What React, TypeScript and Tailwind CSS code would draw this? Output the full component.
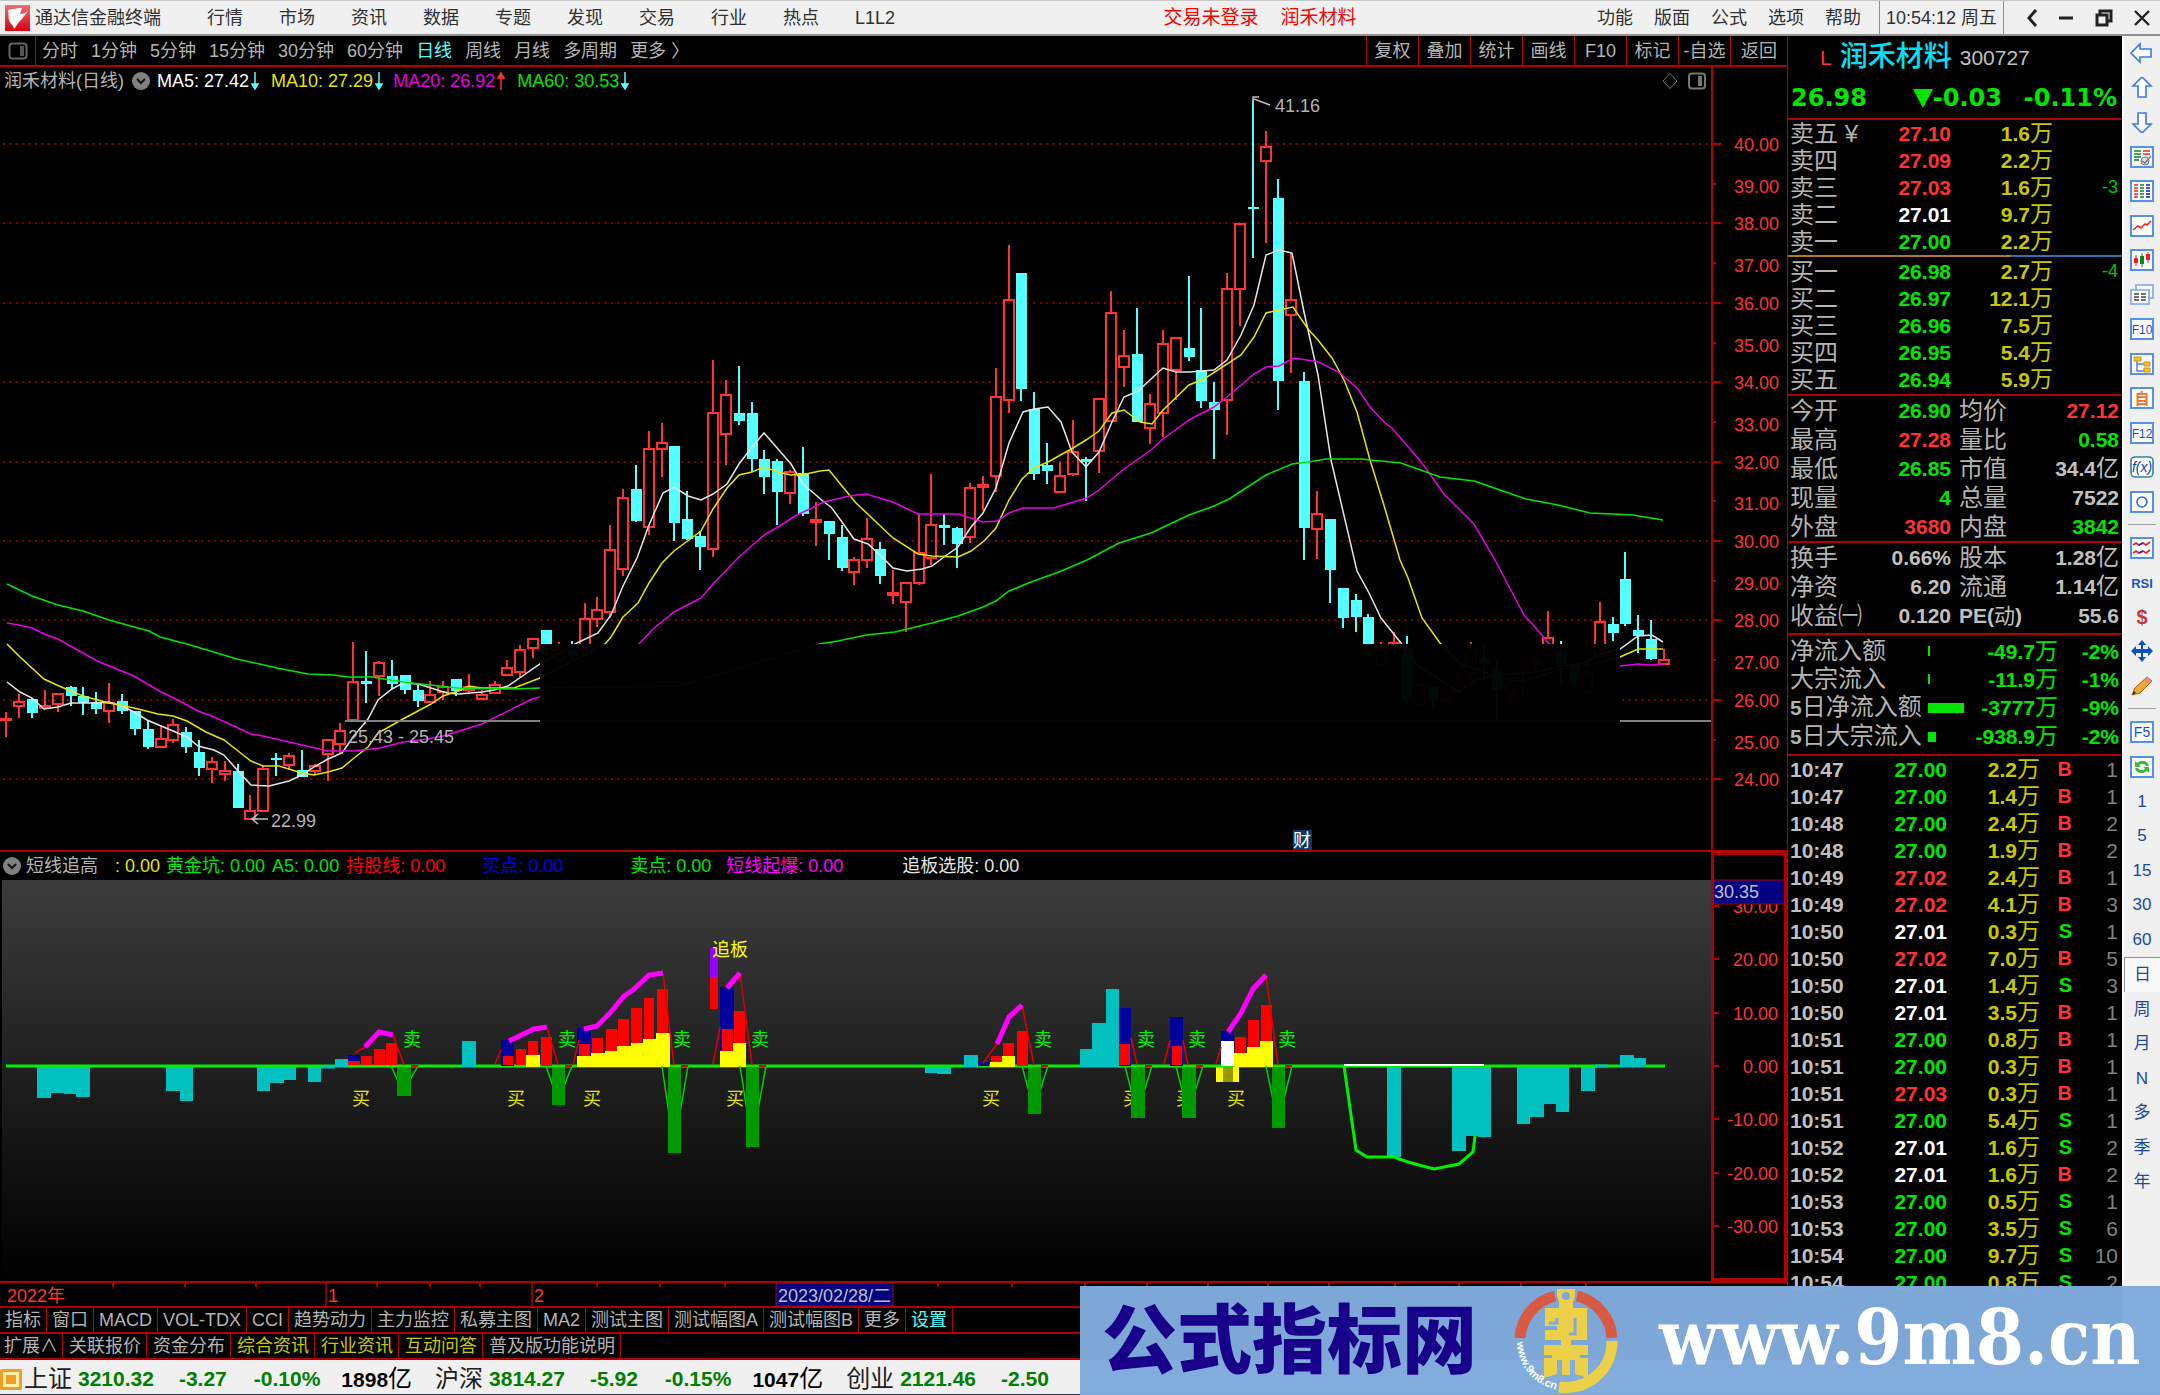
import React from 'react';

const menus = ['行情', '市场', '资讯', '数据', '专题', '发现', '交易', '行业', '热点', 'L1L2'];
const rightMenus = ['功能', '版面', '公式', '选项', '帮助'];
const periods = ['分时', '1分钟', '5分钟', '15分钟', '30分钟', '60分钟', '日线', '周线', '月线', '多周期', '更多 〉'];
const tools = ['复权', '叠加', '统计', '画线', 'F10', '标记', '-自选', '返回'];
const tabs = ['指标', '窗口', 'MACD', 'VOL-TDX', 'CCI', '趋势动力', '主力监控', '私募主图', 'MA2', '测试主图', '测试幅图A', '测试幅图B', '更多', '设置'];
const links = ['扩展∧', '关联报价', '资金分布', '综合资讯', '行业资讯', '互动问答', '普及版功能说明'];

const R = 'text-[#ff3232]';
const G = 'text-[#00e600]';
const W = 'text-white';
const S = 'text-[#c0c0c0]';

const asks = [
  ['卖五 ¥', '27.10', '1.6', '', R],
  ['卖四', '27.09', '2.2', '', R],
  ['卖三', '27.03', '1.6', '-3', R],
  ['卖二', '27.01', '9.7', '', W],
  ['卖一', '27.00', '2.2', '', G],
];
const bids = [
  ['买一', '26.98', '2.7', '-4', G],
  ['买二', '26.97', '12.1', '', G],
  ['买三', '26.96', '7.5', '', G],
  ['买四', '26.95', '5.4', '', G],
  ['买五', '26.94', '5.9', '', G],
];
const info = [
  ['今开', '26.90', G, '均价', '27.12', R],
  ['最高', '27.28', R, '量比', '0.58', G],
  ['最低', '26.85', G, '市值', '34.4亿', S],
  ['现量', '4', G, '总量', '7522', S],
  ['外盘', '3680', R, '内盘', '3842', G],
];
const info2 = [
  ['换手', '0.66%', S, '股本', '1.28亿', S],
  ['净资', '6.20', S, '流通', '1.14亿', S],
  ['收益㈠', '0.120', S, 'PE(动)', '55.6', S],
];
const flows = [
  { name: '净流入额', bar: 2, value: '-49.7', pct: '-2%' },
  { name: '大宗流入', bar: 2, value: '-11.9', pct: '-1%' },
  { name: '5日净流入额', bar: 36, value: '-3777', pct: '-9%' },
  { name: '5日大宗流入', bar: 8, value: '-938.9', pct: '-2%' },
];
const deals = [
  ['10:47', '27.00', '2.2', 'B', '1'],
  ['10:47', '27.00', '1.4', 'B', '1'],
  ['10:48', '27.00', '2.4', 'B', '2'],
  ['10:48', '27.00', '1.9', 'B', '2'],
  ['10:49', '27.02', '2.4', 'B', '1'],
  ['10:49', '27.02', '4.1', 'B', '3'],
  ['10:50', '27.01', '0.3', 'S', '1'],
  ['10:50', '27.02', '7.0', 'B', '5'],
  ['10:50', '27.01', '1.4', 'S', '3'],
  ['10:50', '27.01', '3.5', 'B', '1'],
  ['10:51', '27.00', '0.8', 'B', '1'],
  ['10:51', '27.00', '0.3', 'B', '1'],
  ['10:51', '27.03', '0.3', 'B', '1'],
  ['10:51', '27.00', '5.4', 'S', '1'],
  ['10:52', '27.01', '1.6', 'S', '2'],
  ['10:52', '27.01', '1.6', 'B', '2'],
  ['10:53', '27.00', '0.5', 'S', '1'],
  ['10:53', '27.00', '3.5', 'S', '6'],
  ['10:54', '27.00', '9.7', 'S', '10'],
  ['10:54', '27.00', '0.8', 'S', '2'],
];

// high, body top, body bottom, low, 1 = rising
const candles = [
  [712,719,720,737,1],[694,702,706,718,1],[698,699,713,718,0],[690,706,708,708,1],[694,694,704,712,1],
  [686,687,696,706,0],[687,696,703,715,0],[692,702,709,714,0],[683,703,711,723,1],[694,701,711,714,0],
  [711,711,729,735,0],[720,729,747,749,0],[725,739,747,747,1],[719,725,740,743,1],[727,732,747,753,0],
  [740,752,768,776,0],[757,762,769,783,1],[761,771,774,781,1],[764,771,808,808,0],[795,811,819,819,1],
  [766,769,811,811,1],[753,758,760,776,0],[753,756,765,770,1],[750,770,777,777,0],[764,766,771,775,1],
  [739,740,754,781,1],[723,731,744,753,1],[642,682,720,720,1],[651,681,684,703,0],[661,663,676,696,1],
  [660,676,684,689,0],[675,675,690,694,0],[685,690,701,707,0],[681,695,702,702,1],[681,687,692,700,1],
  [679,679,691,696,0],[674,687,690,694,1],[690,695,699,699,1],[681,685,693,693,1],[660,668,675,675,1],
  [645,650,672,677,1],[639,639,648,658,1],[630,630,650,655,0],[642,650,660,665,1],[641,650,656,660,0],
  [603,619,650,650,1],[597,610,619,627,1],[525,550,612,618,1],[489,498,569,576,1],[465,489,521,522,0],
  [431,449,527,535,1],[423,443,449,477,1],[446,446,523,541,0],[491,519,539,540,0],[531,536,547,570,0],
  [360,413,549,557,1],[380,395,434,465,1],[366,413,421,425,0],[402,413,459,472,0],[450,459,477,494,0],
  [459,461,492,525,0],[470,472,493,504,1],[447,473,514,516,0],[502,520,522,546,1],[521,521,534,560,0],
  [525,537,568,571,0],[557,560,572,585,1],[518,539,560,568,1],[542,549,576,584,0],[570,593,595,604,1],
  [583,583,602,632,1],[514,553,583,585,1],[474,525,558,565,1],[514,525,528,545,0],[527,528,544,568,0],
  [483,488,537,543,1],[476,485,487,511,1],[368,397,476,492,1],[245,300,400,413,1],[273,273,389,401,0],
  [392,409,474,480,0],[443,465,471,484,0],[462,476,492,493,1],[420,452,474,476,1],[457,459,462,501,0],
  [399,399,451,473,1],[291,313,421,421,1],[330,356,367,387,1],[308,354,422,422,0],[394,404,428,444,1],
  [330,344,413,437,1],[338,338,370,400,1],[276,348,357,361,0],[308,370,401,408,0],[382,402,410,459,0],
  [273,289,400,435,1],[224,224,289,326,1],[100,207,208,258,0],[131,147,161,243,1],[179,198,381,410,0],
  [253,300,315,373,1],[372,381,528,560,0],[491,514,529,559,1],[519,519,570,603,0],[588,588,618,628,0],
  [594,600,617,632,0],[614,617,650,655,0],[642,645,665,665,1],[632,643,646,650,1],[636,647,700,703,0],
  [684,685,705,705,1],[687,687,700,707,0],[692,698,700,708,1],[672,679,684,700,1],[642,650,673,690,1],
  [644,658,664,680,0],[660,669,690,720,0],[678,684,693,703,1],[660,669,673,695,1],[655,661,664,675,1],
  [611,638,655,655,1],[641,650,666,685,0],[664,664,683,686,0],[655,673,692,692,1],[602,622,657,657,1],
  [617,624,633,641,0],[552,579,624,626,0],[615,630,636,653,0],[620,639,659,660,0],[649,660,664,664,1],
];

const ma5 = '7,682 20,692 32,698 44,709 58,707 71,703 97,703 109,702 122,706 134,712 147,720 173,731 187,737 198,746 214,750 224,755 238,771 251,785 269,786 289,781 302,775 314,767 328,759 342,753 353,737 368,719 378,700 392,689 403,683 418,684 431,688 447,693 459,694 482,692 494,690 508,686 521,677 540,664 577,643 598,633 611,615 623,586 637,558 649,525 663,493 674,487 688,496 701,500 713,494 727,484 739,464 752,447 764,433 778,449 791,464 803,484 824,502 831,507 842,522 854,539 868,544 881,556 893,568 907,571 922,569 932,566 944,557 958,547 971,527 983,513 996,488 1009,443 1023,412 1034,409 1048,407 1061,422 1072,452 1086,467 1099,452 1112,422 1124,397 1138,391 1151,379 1163,368 1176,372 1190,372 1214,370 1227,360 1241,335 1254,305 1266,255 1279,250 1292,253 1304,312 1318,375 1331,460 1357,571 1369,593 1381,618 1401,643 1419,667 1433,675 1459,692 1476,680 1497,675 1536,672 1558,667 1583,663 1604,653 1620,649 1638,636 1652,635 1663,642';
const ma10 = '7,644 20,657 44,679 59,686 83,696 109,703 134,708 158,714 173,716 187,721 206,732 224,740 238,751 251,761 263,766 279,766 302,773 314,775 328,772 342,768 354,758 368,747 378,733 403,719 431,704 443,696 461,690 469,686 482,688 514,688 540,678 605,644 611,637 623,617 638,603 649,583 662,563 674,551 701,531 713,509 727,488 739,475 752,472 764,467 778,472 791,475 806,474 820,471 829,470 842,486 856,503 893,538 918,554 932,556 958,557 971,551 984,541 996,528 1009,500 1022,479 1034,468 1048,462 1073,448 1086,440 1099,431 1112,413 1124,410 1140,422 1152,424 1163,410 1189,385 1204,379 1241,355 1254,337 1266,313 1279,310 1293,307 1308,329 1318,340 1332,358 1344,380 1357,412 1370,460 1383,502 1400,560 1408,578 1422,618 1440,643 1459,663 1497,677 1522,682 1558,670 1597,663 1620,657 1638,649 1663,649';
const ma20 = '7,623 19,625 32,628 44,634 58,639 97,661 134,676 161,692 174,698 198,711 212,716 251,734 263,736 302,745 328,751 353,751 380,748 403,742 427,739 443,736 482,724 532,699 540,697 639,644 652,630 674,612 701,598 713,584 739,557 764,535 778,527 795,516 824,502 849,496 866,494 893,502 918,514 958,514 983,522 997,521 1009,513 1023,508 1054,508 1087,498 1099,490 1124,469 1151,450 1163,439 1189,420 1214,407 1227,397 1254,374 1266,367 1279,366 1294,358 1319,362 1340,373 1358,389 1370,407 1385,423 1392,428 1422,463 1444,494 1474,524 1495,560 1524,615 1536,628 1548,643 1583,663 1620,666 1638,664 1649,665 1664,664';
const ma60 = '7,584 32,596 58,605 83,611 109,620 149,631 160,637 187,644 237,659 277,668 308,674 334,675 348,677 372,677 403,682 457,688 510,689 540,688 680,686 819,644 838,641 866,635 895,632 932,623 958,616 983,607 996,601 1009,591 1031,582 1059,572 1087,560 1119,543 1151,533 1189,515 1214,506 1229,499 1266,475 1292,464 1308,462 1326,459 1361,459 1401,463 1440,477 1474,481 1500,490 1526,499 1558,505 1590,513 1633,515 1663,520';

// x1, x2, y of the far end of a histogram bar
const teal = [
  [37,51,1098],[51,64,1093],[64,76,1094],[76,90,1097],[166,180,1091],[180,193,1101],[257,270,1091],[270,284,1083],
  [284,296,1080],[308,321,1082],[335,348,1059],[462,476,1041],[925,937,1073],[937,951,1074],[964,978,1055],
  [1080,1092,1049],[1092,1106,1023],[1106,1119,989],[1387,1401,1157],[1452,1466,1151],[1466,1478,1136],
  [1478,1491,1137],[1517,1530,1124],[1530,1544,1117],[1544,1556,1104],[1556,1569,1112],[1581,1595,1091],
  [1620,1634,1055],[1634,1646,1058],
];
const blue = [[348,360,1055,1061],[501,514,1040,1066],[577,591,1028,1066],[720,734,987,1066],[978,989,1062,1066],[1119,1131,1008,1066],[1170,1183,1017,1066],[1221,1234,1031,1041]];
const red = [
  [348,360,1061,1065],[361,372,1056,1065],[374,385,1049,1065],[386,397,1043,1065],
  [503,513,1056,1065],[516,526,1049,1065],[528,538,1041,1055],[541,552,1037,1066],
  [579,590,1044,1056],[592,603,1038,1053],[606,617,1029,1051],[618,629,1019,1046],[631,642,1008,1043],[644,654,998,1039],[657,668,989,1033],
  [710,718,977,1009],[722,733,1029,1051],[734,745,1011,1043],
  [991,1002,1056,1062],[1003,1014,1043,1057],[1017,1028,1031,1066],[1119,1130,1044,1065],[1172,1182,1046,1065],
  [1235,1246,1037,1053],[1248,1259,1020,1047],[1261,1272,1005,1041],
];
const yellow = [
  [526,540,1055,1067],[577,591,1056,1067],[591,605,1053,1067],[605,617,1051,1067],[617,631,1046,1067],[631,643,1043,1067],[643,656,1039,1067],[656,670,1033,1067],
  [720,733,1051,1067],[733,746,1043,1067],[990,1002,1062,1067],[1002,1015,1056,1067],
  [1234,1247,1053,1067],[1247,1260,1047,1067],[1260,1273,1041,1067],[1216,1239,1067,1082],
];
const green = [[397,411,1096],[552,565,1105],[668,681,1153],[746,759,1147],[1028,1041,1114],[1131,1145,1118],[1182,1196,1118],[1272,1285,1128]];
const pinkLines = [
  '365,1047 379,1032 393,1035', '509,1041 534,1029 547,1027',
  '584,1029 597,1026 610,1013 624,996 633,990 649,975 663,973', '727,988 740,973',
  '997,1044 1009,1017 1022,1005', '1228,1032 1241,1013 1253,989 1266,975',
];
const redLines = [
  '355,1053 365,1047', '393,1035 404,1065', '495,1064 501,1050', '547,1027 558,1065', '573,1065 579,1040', '663,973 674,1065',
  '713,1064 720,1027', '740,973 752,1065', '983,1063 997,1044', '1022,1005 1034,1065', '1131,1038 1137,1064',
  '1164,1064 1170,1040', '1183,1040 1188,1065', '1216,1064 1221,1047', '1266,975 1278,1065',
];
const sells = [403, 558, 673, 751, 1034, 1137, 1188, 1278];
const buys = [352, 507, 583, 726, 982, 1123, 1176, 1227];
const dateTicks = [113, 185, 256, 377, 430, 480, 597, 660, 725, 938, 1012, 1085, 1147, 1208, 1268, 1329, 1395, 1459, 1521, 1586];

const priceY = (p: number) => 144 + Math.round((40 - p) * 39.7);
const prices = Array.from({ length: 17 }, (_, i) => 40 - i);

function Chevron() {
  return (
    <svg className="w-[18px] h-[18px] shrink-0" viewBox="0 0 18 18">
      <circle cx="9" cy="9" r="9" fill="#808080" />
      <path d="M5 7l4 4 4-4" fill="none" stroke="#111" strokeWidth="2" />
    </svg>
  );
}

function Arrow({ up = false }) {
  return (
    <svg className="w-2 h-[18px] shrink-0 ml-0.5" viewBox="0 0 8 18">
      {up
        ? <path d="M4 18V1M1 6l3-5 3 5z" stroke="#ff3232" fill="#ff3232" strokeWidth="1.500" />
        : <path d="M4 0v17M1 12l3 5 3-5z" stroke="#54ffff" fill="#54ffff" strokeWidth="1.500" />}
    </svg>
  );
}

function TopBar() {
  return (
    <header className="flex items-center h-9 bg-[#f0f0f0] border-t border-t-[#c8c8c8] border-b-2 border-b-[#909090] text-[18px] leading-6 text-[#303030]">
      <svg className="ml-[5px] w-[25px] h-[26px]" viewBox="0 0 25 26">
        <defs>
          <linearGradient id="lg" x1="0" y1="0" x2="0" y2="1">
            <stop offset="0" stopColor="#f07070" />
            <stop offset="1" stopColor="#d80010" />
          </linearGradient>
        </defs>
        <rect width="25" height="26" fill="url(#lg)" />
        <path d="M3 5c1 4 0 7 1 10 1 4 4 4 5 9 3-3 4-7 8-10l6-8c-3 2-5 3-8 3l2-6c-3 0-5 0-8 1-2 0-4 0-6 1z" fill="#fff" />
      </svg>
      <h1 className="ml-[5px]">通达信金融终端</h1>
      <nav className="flex gap-9 ml-[46px]">
        {menus.map((m) => <button key={m}>{m}</button>)}
      </nav>
      <div className="flex-1 flex justify-center gap-[22px] text-[19px] text-[#ff0000] pl-7">
        <button>交易未登录</button>
        <button>润禾材料</button>
      </div>
      <nav className="flex gap-[21px] mr-[18px]">
        {rightMenus.map((m) => <button key={m}>{m}</button>)}
      </nav>
      <div className="flex items-center justify-center h-full w-[125px] border-x border-[#909090]">10:54:12 周五</div>
      <div className="flex items-center justify-between w-[156px] pl-[22px] pr-[9px]">
        <button aria-label="后退"><svg width="12" height="18" viewBox="0 0 12 18"><path d="M10 1L3 9l7 8" fill="none" stroke="#222" strokeWidth="3" /></svg></button>
        <button aria-label="最小化"><svg width="14" height="18" viewBox="0 0 14 18"><path d="M0 9h14" stroke="#222" strokeWidth="3" /></svg></button>
        <button aria-label="还原"><svg width="18" height="18" viewBox="0 0 18 18"><path d="M5 5V2h11v10h-3M2 6h10v10H2z" fill="none" stroke="#222" strokeWidth="3" /></svg></button>
        <button aria-label="关闭"><svg width="17" height="18" viewBox="0 0 17 18"><path d="M1 2l14 14M15 2L1 16" stroke="#222" strokeWidth="2.400" /></svg></button>
      </div>
    </header>
  );
}

function Toolbar() {
  return (
    <div className="flex h-[31px] border-b-2 border-[#b00000] text-[18px] leading-7 text-[#b4b4b4]">
      <button aria-label="侧栏" className="flex items-center justify-center w-9 border-r border-[#b00000]">
        <svg width="20" height="18" viewBox="0 0 20 18"><rect x="1.500" y="1.500" width="17" height="15" rx="3" fill="none" stroke="#666" strokeWidth="2" /><path d="M12 4v10h4V4z" fill="#555" /></svg>
      </button>
      <div className="flex-1 flex gap-[13px] ml-1.5 whitespace-nowrap">
        {periods.map((p) => (
          <button key={p} className={p === '日线' ? 'text-[#54ffff]' : ''}>{p}</button>
        ))}
      </div>
      {tools.map((t) => (
        <button key={t} className="w-[52px] border-l border-[#b00000] last:w-[57px] whitespace-nowrap">{t}</button>
      ))}
    </div>
  );
}

function PriceChart() {
  return (
    <div className="flex border-b-2 border-[#b00000]">
      <div className="flex-1 min-w-0">
        <div className="flex items-center h-[28px] text-[18px] leading-6 whitespace-nowrap text-[#b4b4b4] pl-1">
          <span>润禾材料</span><span>(日线)</span>
          <span className="ml-2 flex"><Chevron /></span>
          <span className="ml-[7px] text-white">MA5: 27.42</span><Arrow />
          <span className="ml-3 text-[#e6e600]">MA10: 27.29</span><Arrow />
          <span className="ml-2.5 text-[#e600e6]">MA20: 26.92</span><Arrow up />
          <span className="ml-3 text-[#00e600]">MA60: 30.53</span><Arrow />
          <svg className="ml-auto mr-1" width="46" height="18" viewBox="0 0 46 18">
            <path d="M9 1.500l7 7.500-7 7.500L2 9z" fill="none" stroke="#777" />
            <rect x="28" y="1.500" width="16" height="15" rx="3" fill="none" stroke="#777" strokeWidth="2" />
            <path d="M37 4v10h4V4z" fill="#777" />
          </svg>
        </div>
        <svg className="block w-full h-[755px]" viewBox="0 95 1711 755" preserveAspectRatio="none" fontSize="18">
          <g stroke="#b00000" strokeWidth="1.500" strokeDasharray="2 4.400">
            {prices.filter((p) => p % 2 === 0).map((p) => <path key={p} d={`M3 ${priceY(p)}H1711`} />)}
          </g>
          <g shapeRendering="crispEdges">
            {candles.map(([hi, top, bot, lo, up], i) => {
              const x = Math.round(6.3 + i * 12.85);
              return up ? (
                <g key={i} stroke="#ff3232" fill="none" strokeWidth="1.500">
                  <path d={`M${x} ${hi}V${top}M${x} ${bot}V${lo}`} />
                  <rect x={x - 5} y={top} width="10" height={Math.max(bot - top, 1)} />
                </g>
              ) : (
                <g key={i} fill="#54ffff">
                  <rect x={x - 1} y={hi} width="2" height={lo - hi} />
                  <rect x={x - 5} y={top} width="11" height={Math.max(bot - top, 2)} />
                </g>
              );
            })}
          </g>
          <g fill="none" strokeWidth="1.500">
            <polyline points={ma5} stroke="#e6e6e6" />
            <polyline points={ma10} stroke="#e6e600" />
            <polyline points={ma20} stroke="#e600e6" />
            <polyline points={ma60} stroke="#00e600" />
          </g>
          <path d="M345 721H1711" stroke="#808080" strokeWidth="2" />
          <text x="348" y="743" fill="#b4b4b4">25.43 - 25.45</text>
          <rect x="540" y="644" width="1080" height="110" fillOpacity=".97" />
          <path d="M252 819h16M258 814l-6 5 6 5" fill="none" stroke="#c0c0c0" strokeWidth="1.500" />
          <text x="271" y="827" fill="#b4b4b4">22.99</text>
          <path d="M1254 99l16 6M1253 105v-8h6" fill="none" stroke="#c0c0c0" strokeWidth="1.500" />
          <text x="1275" y="112" fill="#b4b4b4">41.16</text>
          <rect x="1293" y="830" width="19" height="20" fill="#103868" />
          <text x="1293" y="847" fill="#fff">财</text>
        </svg>
      </div>
      <svg className="block w-[76px] h-[783px] border-l-2 border-[#b00000]" viewBox="1712 67 74 783" fontSize="18" fill="#ff3232">
        {prices.map((p) => (
          <g key={p}>
            <path d={`M1712 ${priceY(p)}h${p % 2 ? 3 : 8}`} stroke="#b00000" strokeWidth="2" />
            <text x="1778" y={priceY(p) + (p % 2 ? 9 : 7)} textAnchor="end">{p.toFixed(2)}</text>
          </g>
        ))}
      </svg>
    </div>
  );
}

function Indicator() {
  const bars = (list: number[][], fill: string) => list.map(([a, b, t, e], i) => (
    <rect key={i} x={a} y={t} width={b - a} height={e - t} fill={fill} />
  ));
  return (
    <div className="flex">
      <div className="flex-1 min-w-0">
        <div className="flex items-center h-7 text-[18px] leading-6 whitespace-nowrap pl-[3px]">
          <Chevron />
          <span className="ml-[5px] text-[#b4b4b4]">短线追高</span>
          <span className="ml-[17px] text-[#e6e600]">: 0.00</span>
          <span className="ml-1.5 text-[#00e600]">黄金坑: 0.00</span>
          <span className="ml-[7px] text-[#00e600]">A5: 0.00</span>
          <span className="ml-[7px] text-[#ff0000]">持股线: 0.00</span>
          <span className="ml-[37px] text-[#0000e6]">买点: 0.00</span>
          <span className="ml-[67px] text-[#00e600]">卖点: 0.00</span>
          <span className="ml-[15px] text-[#ff00ff]">短线起爆: 0.00</span>
          <span className="ml-[59px] text-[#e6e6e6]">追板选股: 0.00</span>
        </div>
        <svg className="block w-full h-[401px]" viewBox="0 880 1711 401" preserveAspectRatio="none" fontSize="18">
          <defs>
            <linearGradient id="bg" x1="0" y1="0" x2="0" y2="1">
              <stop offset="0" stopColor="#3c3c3c" />
              <stop offset="1" stopColor="#000" />
            </linearGradient>
          </defs>
          <rect x="2" y="880" width="1709" height="401" fill="url(#bg)" />
          <path d="M6 1066H1665" stroke="#00f000" strokeWidth="3" />
          <path d="M321 1067h14M1595 1066h13" stroke="#00c0c0" strokeWidth="3" />
          <g fill="#e6e600">
            {buys.map((x) => <text key={x} x={x} y="1105">买</text>)}
          </g>
          <g shapeRendering="crispEdges">
            {teal.map(([a, b, y]) => (
              <rect key={a} x={a} y={Math.min(y, 1067)} width={b - a} height={Math.abs(1067 - y)} fill="#00c0c0" />
            ))}
            {bars(blue, '#00009c')}
            {bars(red, '#ff0000')}
            {bars(yellow, '#ffff00')}
            <rect x="710" y="948" width="8" height="29" fill="#9600ff" />
            <rect x="1221" y="1041" width="13" height="25" fill="#fff" />
            <rect x="1223" y="1067" width="10" height="15" fill="#969600" />
          </g>
          {green.map(([a, b, y]) => (
            <g key={a}>
              <polyline points={`${a - 6},1066 ${a + 6},${y - 4} ${b + 7},1066`} fill="none" stroke="#00d000" strokeWidth="1.500" />
              <rect x={a} y="1067" width={b - a} height={y - 1067} fill="#009a00" />
              <path d={`M${b} 1066h7`} stroke="#e00000" strokeWidth="2" />
            </g>
          ))}
          {redLines.map((p) => <polyline key={p} points={p} fill="none" stroke="#e00000" strokeWidth="1.500" />)}
          {pinkLines.map((p) => <polyline key={p} points={p} fill="none" stroke="#ff00ff" strokeWidth="5" />)}
          <path d="M1344 1065h140" stroke="#fff" strokeWidth="2" />
          <polyline points="1344,1066 1356,1150 1367,1157 1394,1157 1408,1162 1434,1169 1459,1164 1473,1152 1475,1136" fill="none" stroke="#00f000" strokeWidth="3" />
          <g fill="#00f000">
            {sells.map((x) => <text key={x} x={x} y="1046">卖</text>)}
          </g>
          <text x="712" y="956" fill="#ffff00">追板</text>
        </svg>
      </div>
      <svg className="block w-[76px] h-[429px] border-3 border-[#b00000]" viewBox="1714 855 70 423" fontSize="18" fill="#ff3232">
        {[30, 20, 10, 0, -10, -20, -30].map((v) => (
          <g key={v}>
            <path d={`M1713 ${1066 - Math.round(v * 5.33)}h6`} stroke="#b00000" strokeWidth="2" />
            <text x="1778" y={1073 - Math.round(v * 5.33)} textAnchor="end">{v.toFixed(2)}</text>
          </g>
        ))}
        <rect x="1712" y="880" width="74" height="24" fill="#000080" stroke="#b00000" />
        <text x="1714" y="898" fill="#c0c0c0">30.35</text>
      </svg>
    </div>
  );
}

function BottomTabs() {
  return (
    <>
      <div className="border-t-2 border-[#b00000] h-[25px]">
        <svg className="block w-full h-[23px]" viewBox="0 1283 1787 23" preserveAspectRatio="none" fontSize="18" fill="#ff3232">
          {dateTicks.map((x) => <path key={x} d={`M${x} 1283v4`} stroke="#b00000" strokeWidth="2" />)}
          <path d="M326 1283v23M532 1283v23" stroke="#b00000" strokeWidth="1.500" />
          <text x="7" y="1302">2022年</text>
          <text x="328" y="1302">1</text>
          <text x="534" y="1302">2</text>
          <rect x="776" y="1283" width="117" height="23" fill="#000080" stroke="#b00000" />
          <text x="778" y="1302" fill="#c0c0c0">2023/02/28/二</text>
        </svg>
      </div>
      <div className="flex h-[26px] border-t-2 border-[#b00000] text-[18px] leading-[25px] text-[#b4b4b4] whitespace-nowrap">
        {tabs.map((t) => (
          <button key={t} className={'px-[5px] border-r border-[#b00000]' + (t === '设置' ? ' text-[#54ffff]' : '')}>{t}</button>
        ))}
      </div>
      <div className="flex h-7 border-y-2 border-[#b00000] text-[18px] leading-[25px] text-[#b4b4b4] whitespace-nowrap">
        {links.map((t, i) => (
          <button key={t} className={'pl-1.5 pr-[5px] border-r border-[#b00000] first:px-1' + (i > 2 && i < 6 ? ' text-[#c8c800]' : '')}>{t}</button>
        ))}
      </div>
    </>
  );
}

function BookTable({ rows }: { rows: string[][] }) {
  return (
    <table className="w-full table-fixed">
      <colgroup><col className="w-[90px]" /><col className="w-[73px]" /><col className="w-[102px]" /><col /></colgroup>
      <tbody>
        {rows.map(([name, price, qty, diff, color]) => (
          <tr key={name} className="h-[27px]">
            <th className="text-left font-normal text-2xl leading-[27px] pl-0.5 text-[#b4b4b4] whitespace-nowrap">{name}</th>
            <td className={'text-right font-bold ' + color}>{price}</td>
            <td className="text-right text-[#c8c800] font-bold">{qty}<span className="font-normal text-[23px]">万</span></td>
            <td className="text-right text-[#00c800] text-[18px] pr-1">{diff}</td>
          </tr>
        ))}
      </tbody>
    </table>
  );
}

function InfoTable({ rows }: { rows: string[][] }) {
  return (
    <table className="w-full table-fixed">
      <colgroup><col className="w-[80px]" /><col className="w-[83px]" /><col className="w-[77px]" /><col /></colgroup>
      <tbody>
        {rows.map(([a, av, ac, b, bv, bc]) => (
          <tr key={a} className="h-[29px]">
            <th className="text-left font-normal text-2xl leading-[29px] pl-0.5 text-[#b4b4b4] whitespace-nowrap">{a}</th>
            <td className={'text-right font-bold ' + ac}>{av}</td>
            <th className="text-left font-normal pl-2 text-[#b4b4b4] whitespace-nowrap">
              {b.startsWith('PE') ? <span className="font-bold text-[#c0c0c0]">PE(<span className="font-normal">动</span>)</span> : <span className="text-2xl leading-[29px]">{b}</span>}
            </th>
            <td className={'text-right font-bold pr-[3px] ' + bc}>{bv.replace('亿', '')}{bv.endsWith('亿') && <span className="font-normal text-[23px]">亿</span>}</td>
          </tr>
        ))}
      </tbody>
    </table>
  );
}

function QuotePanel() {
  return (
    <aside className="w-[335px] h-[1324px] overflow-hidden border-l border-[#b00000] text-[21px] leading-[27px]">
      <div className="h-[84px] border-b-2 border-[#b00000]">
        <div className="flex items-center h-[42px] pl-8 text-[#c0c0c0]">
          <span className="text-[#ff3232]">L</span>
          <h2 className="ml-2 text-[28px] leading-10 font-medium text-[#00e0f8]">润禾材料</h2>
          <span className="ml-2">300727</span>
        </div>
        <div className="flex items-center justify-between h-10 pl-[3px] pr-[5px] text-2xl font-bold text-[#00e600] font-['DejaVu_Sans']">
          <span>26.98</span>
          <span className="flex items-center ml-6">
            <svg width="20" height="19" viewBox="0 0 20 19"><path d="M0 0h20L10 19z" fill="#00e600" /></svg>
            -0.03
          </span>
          <span>-0.11%</span>
        </div>
      </div>
      <BookTable rows={asks} />
      <div className="flex h-0.5"><span className="w-2/3 bg-[#b07820]" /><span className="flex-1 bg-[#3070b0]" /></div>
      <div className="pt-px pb-px border-b-2 border-[#b00000]"><BookTable rows={bids} /></div>
      <div className="border-b-2 border-[#b00000]"><InfoTable rows={info} /></div>
      <div className="pb-[3px] border-b-2 border-[#b00000]"><InfoTable rows={info2} /></div>
      <div className="pb-[3px] border-b-2 border-[#b00000]">
        <table className="w-full table-fixed mt-0.5">
          <colgroup><col className="w-[140px]" /><col className="w-[38px]" /><col className="w-[92px]" /><col /></colgroup>
          <tbody>
            {flows.map((f) => (
              <tr key={f.name} className="h-7 text-[#00e600]">
                <th className="text-left font-normal text-[#b4b4b4] text-2xl leading-7 pl-0.5 whitespace-nowrap">{f.name.startsWith('5') ? <><b className="text-[21px]">5</b>{f.name.slice(1)}</> : f.name}</th>
                <td><span className="block h-2.5 bg-[#00e600]" style={{ width: f.bar }} /></td>
                <td className="text-right font-bold whitespace-nowrap">{f.value}<span className="font-normal text-[23px]">万</span></td>
                <td className="text-right font-bold pr-[3px]">{f.pct}</td>
              </tr>
            ))}
          </tbody>
        </table>
      </div>
      <table className="w-full table-fixed">
        <colgroup><col className="w-[75px]" /><col className="w-[84px]" /><col className="w-[93px]" /><col className="w-[32px]" /><col /></colgroup>
        <tbody>
          {deals.map(([t, p, q, side, n], i) => (
            <tr key={i} className="h-[27px] font-bold">
              <td className="pl-0.5 text-[#c0c0c0]">{t}</td>
              <td className={'text-right ' + (p === '27.01' ? W : p === '27.00' ? G : R)}>{p}</td>
              <td className="text-right text-[#c8c800]">{q}<span className="font-normal text-[23px]">万</span></td>
              <td className={'text-right text-[20px] ' + (side === 'B' ? R : G)}>{side}</td>
              <td className="text-right font-normal text-[#808080] pr-1">{n}</td>
            </tr>
          ))}
        </tbody>
      </table>
    </aside>
  );
}

const arrowPath = 'M1 11l9-9v5h11v8H10v5z';
const frame = <rect x="1" y="1" width="22" height="20" fill="#fff" stroke="#5590ee" strokeWidth="2" />;
const sideIcons: [string, React.ReactNode][] = [
  ['左', <path d={arrowPath} fill="#fff" stroke="#3a78e8" strokeWidth="1.600" />],
  ['上', <path d={arrowPath} transform="rotate(90 12 11)" fill="#fff" stroke="#3a78e8" strokeWidth="1.600" />],
  ['下', <path d={arrowPath} transform="rotate(-90 12 11)" fill="#fff" stroke="#3a78e8" strokeWidth="1.600" />],
  ['自选股', <>{frame}<path d="M4 5h7M4 8h7M4 11h7M4 14h5" stroke="#008a20" strokeWidth="1.600" /><path d="M13 5h7M13 8h7" stroke="#f02020" strokeWidth="1.600" /><circle cx="15" cy="15" r="4" fill="#ddd" stroke="#777" /><path d="M12 15l3 2 6-7" fill="none" stroke="#777" strokeWidth="1.500" /></>],
  ['报价', <>{frame}<path d="M4 5h4M4 8h4M4 11h4M4 14h4M4 17h4" stroke="#f02020" strokeWidth="1.600" /><path d="M10 5h4M10 8h4M10 11h4M10 14h4M10 17h4" stroke="#008a20" strokeWidth="1.600" /><path d="M16 5h4M16 8h4M16 11h4M16 14h4M16 17h4" stroke="#1010e0" strokeWidth="1.600" /></>],
  ['走势', <>{frame}<path d="M3 15l5-4 3 2 4-4 2 1 4-4" fill="none" stroke="#f02020" strokeWidth="1.600" /></>],
  ['K线', <>{frame}<path d="M6 6v11M18 3v11" stroke="#f02020" /><path d="M4 9h4v5H4zM16 5h4v6h-4z" fill="#f02020" /><path d="M12 4v14" stroke="#008a20" /><path d="M10 7h4v8h-4z" fill="#008a20" /></>],
  ['多窗', <><path d="M6 1h17v13H6z" fill="#fff" stroke="#7aa4ee" strokeWidth="1.600" /><path d="M1 6h18v14H1z" fill="#fff" stroke="#7aa4ee" strokeWidth="1.600" /><path d="M4 10h5M11 10h5M4 13h5M11 13h5M4 16h5M11 16h5" stroke="#444" strokeWidth="1.500" /></>],
  ['F10', <>{frame}<text x="12" y="16" fontSize="12" textAnchor="middle" fill="#1050c8">F10</text></>],
  ['结构', <>{frame}<path d="M7 7v11h7M7 11h7" fill="none" stroke="#4a80e8" strokeWidth="1.500" /><path d="M4 4h7v4H4zM14 9h6v4h-6zM14 15h6v4h-6z" fill="#ffc020" stroke="#d09010" /></>],
  ['自', <>{frame}<text x="12" y="17" fontSize="15" fontWeight="bold" textAnchor="middle" fill="#f07030">自</text></>],
  ['F12', <>{frame}<text x="12" y="16" fontSize="12" textAnchor="middle" fill="#1050c8">F12</text></>],
  ['公式', <><rect x="1" y="1" width="22" height="20" rx="4" fill="#fff" stroke="#2a8a9a" strokeWidth="1.600" /><text x="12" y="16" fontSize="14" fontStyle="italic" textAnchor="middle" fill="#1040b0">f(x)</text></>],
  ['圆', <>{frame}<circle cx="12" cy="11" r="5" fill="none" stroke="#2a6ad0" strokeWidth="1.600" /></>],
  ['-', null],
  ['波动', <>{frame}<path d="M3 8l3-2 3 2 4-2 3 2 4-3M3 16l3-2 3 2 4-2 3 2 4-3" fill="none" stroke="#f02020" strokeWidth="1.600" /><path d="M9 8l4-2M9 16l4-2" stroke="#2020e0" strokeWidth="1.600" /></>],
  ['RSI', <text x="12" y="16" fontSize="13" fontWeight="bold" textAnchor="middle" fill="#2050d8">RSI</text>],
  ['资金', <text x="12" y="18" fontSize="20" fontWeight="bold" textAnchor="middle" fill="#c03838">$</text>],
  ['移动', <path d="M12 0l4 5h-3v4h5V6l5 5-5 5v-3h-5v4h3l-4 5-4-5h3v-4H6v3l-5-5 5-5v3h5V5H8z" fill="#0a50c0" />],
  ['画笔', <><path d="M2 20l3-7L17 2l5 4L10 18z" fill="#f0a830" stroke="#9a6010" /><path d="M17 2l5 4-3 3-5-4z" fill="#f08888" /><path d="M2 20l2-4 2 2z" fill="#333" /></>],
  ['-', null],
  ['F5', <>{frame}<text x="12" y="16" fontSize="14" textAnchor="middle" fill="#1050c8">F5</text></>],
  ['刷新', <>{frame}<path d="M5 5v6h6L9 9c3-2 6-1 7 1h3c-1-5-7-7-12-3zM19 17v-6h-6l2 2c-3 2-6 1-7-1H5c1 5 7 7 12 3z" fill="#40b840" /></>],
];
const sideTexts = ['1', '5', '15', '30', '60', '日', '周', '月', 'N', '多', '季', '年'];

function SideBar() {
  return (
    <nav className="w-[38px] bg-[#f0f0f0] border-l-2 border-white">
      <div className="flex flex-col h-[1163px]">
        {sideIcons.map(([label, icon], i) => icon === null ? (
          <hr key={i} className="mx-1 mt-[5px] mb-1.5 border-[#a0a0a0]" />
        ) : (
          <button key={label} aria-label={label} className="flex-1 flex items-center justify-center">
            <svg width="24" height="22" viewBox="0 0 24 22">{icon}</svg>
          </button>
        ))}
        {sideTexts.map((t) => (
          <button key={t} className={'flex-1 text-[17px] leading-none text-[#1c48a0]' + (t === '日' ? ' bg-[#f8f8f8] border-l border-t border-[#909090]' : '')}>{t}</button>
        ))}
      </div>
    </nav>
  );
}

function Quote({ name, index, diff, pct, amount }: { name: string; index: string; diff: string; pct?: string; amount?: string }) {
  return (
    <div className="flex items-center whitespace-nowrap mr-[23px] font-bold text-[#008000]">
      <span className="text-2xl font-normal text-[#202020]">{name}</span>
      <span className="ml-1.5">{index}</span>
      <span className="ml-[25px]">{diff}</span>
      {pct && <span className="ml-[27px]">{pct}</span>}
      {amount && <span className="ml-[21px] text-black">{amount}<span className="font-normal text-2xl">亿</span></span>}
    </div>
  );
}

function StatusBar() {
  return (
    <footer className="flex items-center h-[35px] pt-1 bg-[#f0f0f0] text-[21px] leading-8 border-b border-[#203850] overflow-hidden">
      <svg className="mr-0.5 shrink-0" width="22" height="21" viewBox="0 0 22 21">
        <rect width="22" height="21" rx="2" fill="#f0a020" />
        <rect x="3" y="3" width="16" height="15" fill="#fff0b0" />
        <rect x="6" y="6" width="10" height="9" fill="#f0a020" />
      </svg>
      <Quote name="上证" index="3210.32" diff="-3.27" pct="-0.10%" amount="1898" />
      <Quote name="沪深" index="3814.27" diff="-5.92" pct="-0.15%" amount="1047" />
      <Quote name="创业" index="2121.46" diff="-2.50" />
    </footer>
  );
}

function Banner() {
  return (
    <div className="absolute right-0 bottom-0 w-1/2 h-[109px] bg-[#7eaadb]/98 flex items-center pl-[22px]">
      <span className="text-[75px] leading-[100px] font-black text-[#18008a] whitespace-nowrap">公式指标网</span>
      <svg className="ml-9 shrink-0" width="106" height="106" viewBox="0 0 106 106">
        <path d="M7 50A46 46 0 0 1 42 8" fill="none" stroke="#d85a44" strokeWidth="11" />
        <path d="M64 8a46 46 0 0 1 35 42" fill="none" stroke="#d85a44" strokeWidth="11" />
        <path d="M99 53A46 46 0 0 1 46 99" fill="none" stroke="#ecd048" strokeWidth="11" />
        <path d="M44 1h18v7l-2 6v6h14v32H58v5h17v10h-8v3h8v20l-13-4V72h-5v15h-8V72h-5v14l-13 4V70h8v-3h-8V57h17v-5H32V42h12v-4H32V20h14v-6l-2-6z" fill="#ecd048" />
        <circle cx="53" cy="8" r="4" fill="#7eaadb" />
        <path d="M44 30v5h-8M62 30v16h-6" fill="none" stroke="#7eaadb" strokeWidth="3" />
        <path id="ring" d="M4 54A49 49 0 0 0 46 102" fill="none" />
        <text fontSize="11" fontWeight="bold" fill="#fff"><textPath href="#ring">www.9m8.cn</textPath></text>
      </svg>
      <span className="ml-10 text-[77px] leading-[96px] pb-2 font-bold text-white whitespace-nowrap font-['DejaVu_Serif_Condensed','DejaVu_Serif',serif]">www.9m8.cn</span>
    </div>
  );
}

export default function App() {
  return (
    <div className="relative min-h-screen bg-black overflow-hidden font-['Liberation_Sans','Noto_Sans_CJK_SC',sans-serif]">
      <TopBar />
      <div className="flex">
        <main className="flex-1 min-w-0">
          <Toolbar />
          <PriceChart />
          <Indicator />
          <BottomTabs />
        </main>
        <QuotePanel />
        <SideBar />
      </div>
      <StatusBar />
      <Banner />
    </div>
  );
}
